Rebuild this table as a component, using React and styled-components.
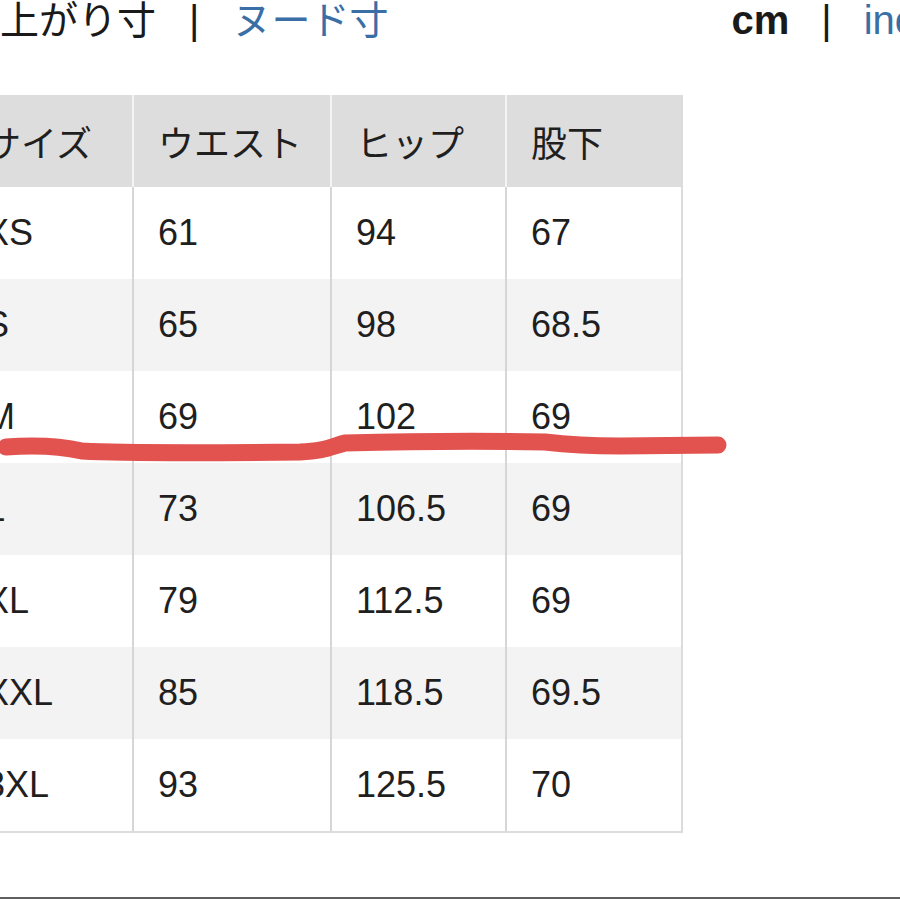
import React from 'react';
import styled, { createGlobalStyle } from 'styled-components';

const GlobalStyle = createGlobalStyle`
  html, body {
    margin: 0;
    padding: 0;
    background: #ffffff;
    overflow: hidden;
  }
  body {
    font-family: "Liberation Sans", "Noto Sans CJK JP", sans-serif;
    color: #1f1f1f;
  }
`;

const Screen = styled.div`
  position: relative;
  width: 900px;
  height: 900px;
  overflow: hidden;
`;

const Page = styled.div`
  margin-left: -39px;
  width: 1100px;
  display: flex;
  flex-direction: column;
`;

const TopBar = styled.div`
  display: flex;
  align-items: baseline;
  height: 95px;
  font-size: 39px;
  line-height: 1;
`;

const Toggle = styled.div`
  display: flex;
  align-items: baseline;
  white-space: nowrap;
  margin-top: -3px;
`;

const Option = styled.span`
  font-family: "Noto Sans CJK JP", sans-serif;
  color: ${(p) => (p.active ? '#1a1a1a' : '#3a6ea6')};
`;

const Unit = styled.span`
  font-family: "Liberation Sans", sans-serif;
  font-size: 40px;
  font-weight: ${(p) => (p.active ? 700 : 400)};
  color: ${(p) => (p.active ? '#1a1a1a' : '#3a6ea6')};
`;

const Sep = styled.span`
  font-family: "Liberation Sans", sans-serif;
  font-size: 40px;
  color: #1a1a1a;
  margin: 0 ${(p) => p.space}px;
`;

const Units = styled.div`
  display: flex;
  align-items: baseline;
  margin-left: 343px;
  white-space: nowrap;
`;

const Table = styled.div`
  display: grid;
  grid-template-columns: 173px 198px 175px 174px;
  width: max-content;
  border-right: 2px solid #dcdcdc;
  border-bottom: 2px solid #dcdcdc;
`;

const Cell = styled.div`
  height: 92px;
  display: flex;
  align-items: center;
  padding-left: 24px;
  box-sizing: border-box;
  font-size: 36px;
  color: #1f1f1f;
  white-space: nowrap;
  background: ${(p) => (p.head ? '#dddddd' : p.shade ? '#f3f3f3' : '#ffffff')};
  border-right: ${(p) => (p.last ? 'none' : p.head ? '2px solid #f4f4f4' : '2px solid #d6d6d6')};
  font-family: ${(p) => (p.head ? '"Noto Sans CJK JP", sans-serif' : '"Liberation Sans", sans-serif')};
`;

const BottomRule = styled.div`
  margin-top: 64px;
  height: 2px;
  background: #5f5f5f;
`;

const Marker = styled.svg`
  position: absolute;
  left: 0;
  top: 0;
  pointer-events: none;
`;

const headers = ['サイズ', 'ウエスト', 'ヒップ', '股下'];

const rows = [
  ['XS', '61', '94', '67'],
  ['S', '65', '98', '68.5'],
  ['M', '69', '102', '69'],
  ['L', '73', '106.5', '69'],
  ['XL', '79', '112.5', '69'],
  ['XXL', '85', '118.5', '69.5'],
  ['3XL', '93', '125.5', '70'],
];

export default function App() {
  return (
    <Screen>
      <GlobalStyle />
      <Page>
        <TopBar>
          <Toggle>
            <Option active>仕上がり寸</Option>
            <Sep space={33}>|</Sep>
            <Option>ヌード寸</Option>
          </Toggle>
          <Units>
            <Unit active>cm</Unit>
            <Sep space={32}>|</Sep>
            <Unit>inches</Unit>
          </Units>
        </TopBar>
        <Table>
          {headers.map((h, i) => (
            <Cell head key={h} last={i === headers.length - 1}>{h}</Cell>
          ))}
          {rows.map((row, r) =>
            row.map((v, i) => (
              <Cell key={`${r}-${i}`} shade={r % 2 === 1} last={i === row.length - 1}>{v}</Cell>
            ))
          )}
        </Table>
        <BottomRule />
      </Page>
      <Marker width="900" height="900" viewBox="0 0 900 900">
        <path
          d="M6 447 C 35 445, 60 446, 82 451 C 120 453, 200 453, 300 452 C 325 451, 330 447, 345 443 C 420 441, 500 441, 545 442 C 570 445, 590 446, 620 446 L 718 445"
          fill="none"
          stroke="#e2524f"
          strokeWidth="17"
          strokeLinecap="round"
          strokeLinejoin="round"
        />
      </Marker>
    </Screen>
  );
}
